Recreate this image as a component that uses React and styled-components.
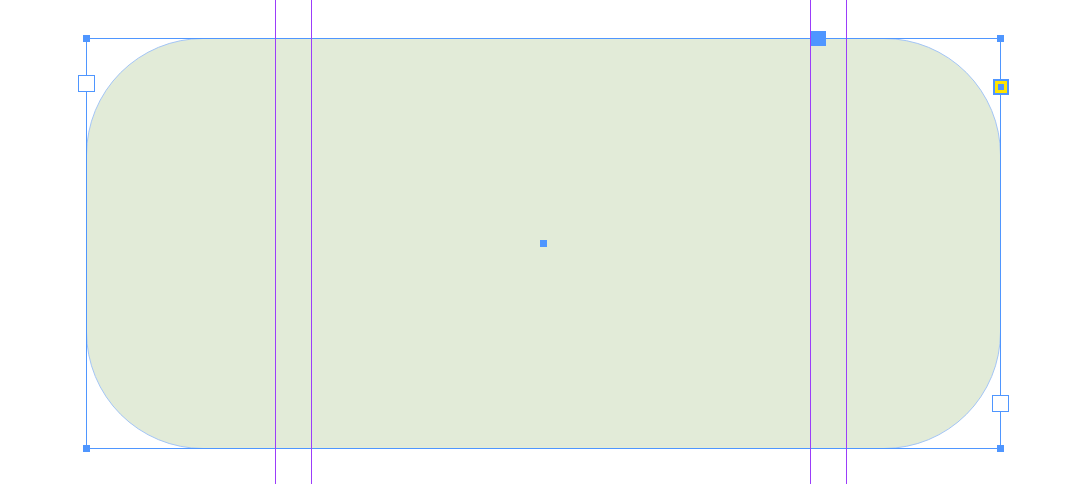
import styled, { createGlobalStyle } from 'styled-components'

const GlobalStyle = createGlobalStyle`
  html, body {
    margin: 0;
    padding: 0;
    background: #ffffff;
    font-family: "Liberation Sans", Arial, sans-serif;
  }
`;

// free drawing canvas of the editor
const Canvas = styled.div`
  position: relative;
  width: 1088px;
  height: 484px;
  background: #ffffff;
  overflow: hidden;
`;

// the selected object and its bounding box share one frame
const Frame = styled.div`
  position: absolute;
  left: 86px;
  top: 38px;
  width: 915px;
  height: 411px;
`;

const Shape = styled.div`
  position: absolute;
  inset: 0;
  box-sizing: border-box;
  background: #e2ebd8;
  border: 1px solid #a3c5f6;
  border-radius: ${p => p.radius}px;
`;

const Selection = styled.div`
  position: absolute;
  inset: 0;
  box-shadow: inset 0 0 0 1px #4f96ff;
`;

// smart guides snapping across the whole canvas
const Guide = styled.div`
  position: absolute;
  top: 0;
  bottom: 0;
  left: ${p => p.x}px;
  width: 1px;
  background: #9b3dfa;
`;

const Handle = styled.div`
  position: absolute;
  box-sizing: border-box;
  left: calc(${p => p.fx} * (100% - 1px));
  top: calc(${p => p.fy} * (100% - 1px));
  width: ${p => p.size}px;
  height: ${p => p.size}px;
  margin-left: ${p => -Math.floor((p.size - 1) / 2)}px;
  margin-top: ${p => -Math.floor((p.size - 1) / 2)}px;
  background: ${p => (p.hollow ? '#ffffff' : '#4f96ff')};
  border: ${p => (p.hollow ? '1px solid #4f96ff' : 'none')};
`;

const RadiusHandle = styled(Handle)`
  border: 2px solid #4f96ff;
  background: #ffe500;
  display: flex;
  align-items: center;
  justify-content: center;

  &::after {
    content: '';
    width: 6px;
    height: 6px;
    background: #4f96ff;
  }
`;

const corners = [
  [0, 0],
  [1, 0],
  [0, 1],
  [1, 1],
];

const App = () => {
  return (
    <Canvas>
      <GlobalStyle />
      <Frame>
        <Shape radius={117} />
        <Selection />
      </Frame>

      <Guide x={275} />
      <Guide x={311} />
      <Guide x={810} />
      <Guide x={846} />

      <Frame>
        {corners.map(([fx, fy]) => (
          <Handle key={`${fx}-${fy}`} fx={fx} fy={fy} size={7} />
        ))}
        <Handle fx={0.5} fy={0.5} size={7} />
        <Handle fx={732 / 914} fy={0} size={15} />
        <Handle fx={0} fy={45 / 410} size={17} hollow />
        <Handle fx={1} fy={365 / 410} size={17} hollow />
        <RadiusHandle fx={1} fy={48 / 410} size={16} />
      </Frame>
    </Canvas>
  );
};

export default App;
